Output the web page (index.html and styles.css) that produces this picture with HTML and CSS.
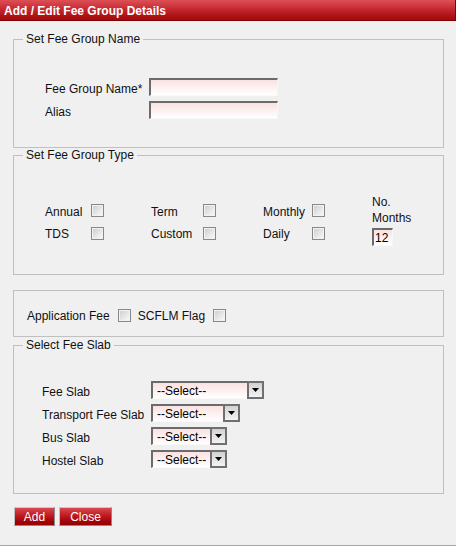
FILE: index.html
```html
<!DOCTYPE html>
<html>
<head>
<meta charset="utf-8">
<link rel="stylesheet" href="styles.css">
</head>
<body>
<div class="page">
  <div class="header">Add / Edit Fee Group Details</div>
  <div class="content">
    <fieldset class="fs fs-name">
      <legend>Set Fee Group Name</legend>
      <div class="name-grid">
        <label>Fee Group Name*</label><input type="text" class="txt w129">
        <label>Alias</label><input type="text" class="txt w129">
      </div>
    </fieldset>

    <fieldset class="fs fs-type">
      <legend>Set Fee Group Type</legend>
      <div class="type-grid">
        <label class="r1">Annual</label><span class="r1 cbwrap1"><input type="checkbox" class="cb"></span>
        <label class="r1">Term</label><span class="r1 cbwrap1"><input type="checkbox" class="cb"></span>
        <label class="r1">Monthly</label><span class="r1 cbwrap1"><input type="checkbox" class="cb"></span>
        <label class="r1 months">No.<br>Months</label>
        <label class="r2">TDS</label><span class="r2 cbwrap"><input type="checkbox" class="cb"></span>
        <label class="r2">Custom</label><span class="r2 cbwrap"><input type="checkbox" class="cb"></span>
        <label class="r2">Daily</label><span class="r2 cbwrap"><input type="checkbox" class="cb"></span>
        <span class="r2 numwrap"><input type="text" class="txt num" value="12"></span>
      </div>
    </fieldset>

    <fieldset class="fs fs-flags">
      <div class="flag-row">
        <label class="flag-label">Application Fee</label><input type="checkbox" class="cb flag-cb">
        <label class="flag-label">SCFLM Flag</label><input type="checkbox" class="cb">
      </div>
    </fieldset>

    <fieldset class="fs fs-slab">
      <legend>Select Fee Slab</legend>
      <div class="slab-grid">
        <label>Fee Slab</label>
        <div class="sel w113"><span class="val">--Select--</span><span class="btn"><svg width="7" height="4" viewBox="0 0 7 4"><path d="M0 0H7L3.5 4Z" fill="#000"/></svg></span></div>
        <label>Transport Fee Slab</label>
        <div class="sel w89"><span class="val">--Select--</span><span class="btn"><svg width="7" height="4" viewBox="0 0 7 4"><path d="M0 0H7L3.5 4Z" fill="#000"/></svg></span></div>
        <label>Bus Slab</label>
        <div class="sel w76"><span class="val">--Select--</span><span class="btn"><svg width="7" height="4" viewBox="0 0 7 4"><path d="M0 0H7L3.5 4Z" fill="#000"/></svg></span></div>
        <label>Hostel Slab</label>
        <div class="sel w76"><span class="val">--Select--</span><span class="btn"><svg width="7" height="4" viewBox="0 0 7 4"><path d="M0 0H7L3.5 4Z" fill="#000"/></svg></span></div>
      </div>
    </fieldset>

    <div class="actions">
      <button class="rbtn w41">Add</button>
      <button class="rbtn w53">Close</button>
    </div>
  </div>
</div>
</body>
</html>
```
FILE: styles.css
```css
html, body {
  margin: 0;
  padding: 0;
  background: #f0f0f0;
}
body {
  font-family: "Liberation Sans", Arial, sans-serif;
  font-size: 12px;
  color: #111;
  overflow: hidden;
}
.page {
  height: 546px;
  box-sizing: border-box;
  border-bottom: 1px solid #a8a8a8;
}
.header {
  height: 21px;
  box-sizing: border-box;
  background: linear-gradient(#dc5056 0%, #c62a31 45%, #ac1116 80%, #a50a0f 100%);
  border-bottom: 1px solid #800000;
  border-right: 1px solid #8a0000;
  color: #fff;
  font-weight: bold;
  font-size: 12px;
  line-height: 18px;
  padding: 2px 0 0 4px;
  overflow: hidden;
}
.content {
  margin-left: 13px;
  width: 431px;
}
.fs {
  margin: 0;
  padding: 0;
  border: 1px solid #c0c0c0;
  min-width: 0;
}
.fs legend {
  margin-left: 9px;
  padding: 0 3px;
  font-size: 12px;
  line-height: 14px;
}
.fs-name { margin-top: 11px; }
.fs-type { margin-top: 0; }
.fs-flags { margin-top: 15px; }
.fs-slab { margin-top: 1px; }

label { line-height: 14px; }

.txt {
  box-sizing: border-box;
  height: 18px;
  margin: 0;
  padding: 1px 0 0 2px;
  border-top: 2px solid #6b6b6b;
  border-left: 2px solid #6b6b6b;
  border-right: 1px solid #f6f6f6;
  border-bottom: 1px solid #fafafa;
  background: linear-gradient(#fbe1e1, #ffffff);
  font-family: "Liberation Sans", Arial, sans-serif;
  font-size: 12px;
  color: #000;
  outline: none;
  display: block;
}
.w129 { width: 129px; }

.name-grid {
  display: grid;
  grid-template-columns: 104px 129px;
  row-gap: 5px;
  align-items: center;
  margin: 32px 0 28px 31px;
}
.name-grid label { padding-top: 4px; }

.cb {
  appearance: none;
  -webkit-appearance: none;
  width: 13px;
  height: 13px;
  margin: 0;
  box-sizing: border-box;
  border: 1px solid #888;
  background: linear-gradient(135deg, #cbcbcb 0%, #e4e4e4 50%, #fbfbfb 100%);
  box-shadow: inset 0 0 0 1px #f2f2f2;
  display: block;
}

.type-grid {
  display: grid;
  grid-template-columns: 46px 60px 52px 60px 49px 60px auto;
  grid-template-rows: 33px auto;
  margin: 31px 0 28px 31px;
}
.type-grid .r1 { grid-row: 1; align-self: center; }
.type-grid .r2 { grid-row: 2; align-self: start; }
.type-grid label.r1 { padding-top: 4px; }
.type-grid label.r2 { padding-top: 1px; }
.type-grid .cbwrap1 { padding-top: 1px; }
.type-grid label.months {
  line-height: 16px;
  align-self: start;
  padding-top: 1px;
}
.type-grid .cbwrap { padding-top: 1px; }
.type-grid .numwrap { padding-top: 2px; }
.num { width: 21px; padding-left: 1px; }

.flag-row {
  display: flex;
  align-items: center;
  height: 14px;
  margin: 17px 0 14px 13px;
}
.flag-label { margin-right: 8px; padding-top: 2px; }
.flag-cb { margin-right: 7px; }

.slab-grid {
  display: grid;
  grid-template-columns: 109px auto;
  row-gap: 5px;
  align-items: center;
  justify-items: start;
  margin: 29px 0 25px 28px;
}
.slab-grid label { padding-top: 4px; }
.sel {
  display: flex;
  height: 18px;
}
.sel .val {
  flex: 1;
  box-sizing: border-box;
  border-top: 2px solid #6b6b6b;
  border-left: 2px solid #6b6b6b;
  border-bottom: 1px solid #fafafa;
  background: linear-gradient(#fbe1e1, #ffffff);
  padding-left: 4px;
  line-height: 17px;
  color: #000;
  white-space: nowrap;
  overflow: hidden;
}
.sel .btn {
  width: 17px;
  box-sizing: border-box;
  border: 2px solid #707070;
  background: linear-gradient(#d2d2d2, #f3f3f3);
  display: flex;
  align-items: center;
  justify-content: center;
}
.w113 { width: 113px; }
.w89 { width: 89px; }
.w76 { width: 76px; }

.actions {
  display: flex;
  gap: 4px;
  margin: 13px 0 0 1px;
}
.rbtn {
  height: 19px;
  box-sizing: border-box;
  margin: 0;
  padding: 1px 0 0;
  border: 1px solid;
  border-color: #c8c8c8 #8a8a8a #8a8a8a #c0c0c0;
  background: linear-gradient(#d9474e 0%, #bd1b21 45%, #a00408 80%, #960000 100%);
  color: #fff;
  font-family: "Liberation Sans", Arial, sans-serif;
  font-size: 12px;
  line-height: 16px;
  text-align: center;
}
.w41 { width: 41px; }
.w53 { width: 53px; }
```
